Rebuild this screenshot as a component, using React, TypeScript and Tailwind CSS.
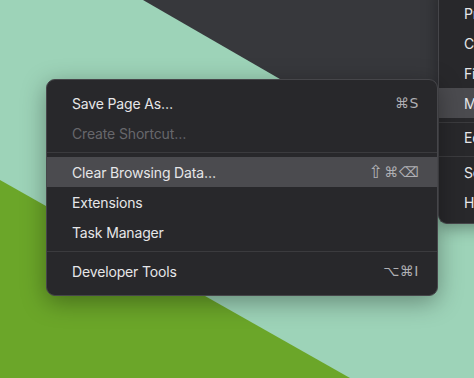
import React from 'react';

type Item =
  | { kind: 'item'; label: string; shortcut?: React.ReactNode; disabled?: boolean; active?: boolean; h?: string }
  | { kind: 'sep'; h?: string; align?: string };

const moreTools: Item[] = [
  { kind: 'item', label: 'Save Page As…', shortcut: '⌘S' },
  { kind: 'item', label: 'Create Shortcut…', disabled: true },
  { kind: 'sep' },
  {
    kind: 'item',
    label: 'Clear Browsing Data…',
    shortcut: (
      <>
        <span className="text-[18px] leading-none">⇧</span>⌘⌫
      </>
    ),
    active: true,
  },
  { kind: 'item', label: 'Extensions' },
  { kind: 'item', label: 'Task Manager' },
  { kind: 'sep' },
  { kind: 'item', label: 'Developer Tools', shortcut: '⌥⌘I' },
];

const mainMenu: Item[] = [
  { kind: 'item', label: 'Print…' },
  { kind: 'item', label: 'Cast…' },
  { kind: 'item', label: 'Find…' },
  { kind: 'item', label: 'More Tools', active: true },
  { kind: 'sep', h: 'h-[8px]' },
  { kind: 'item', label: 'Edit', h: 'h-[22px]' },
  { kind: 'sep', h: 'h-[9px]', align: 'items-end' },
  { kind: 'item', label: 'Settings' },
  { kind: 'item', label: 'Help' },
];

function Row({ item }: { item: Item }) {
  if (item.kind === 'sep') {
    return (
      <div className={`${item.h ?? 'h-[9px]'} flex ${item.align ?? 'items-center'}`}>
        <div className="h-px w-full bg-[#3b3b3e]" />
      </div>
    );
  }
  return (
    <div
      className={`${item.h ?? 'h-[30px]'} flex items-center justify-between pl-[25px] pr-[18px] whitespace-nowrap ${
        item.active ? 'bg-[#4b4b4f]' : ''
      }`}
    >
      <span className={item.disabled ? 'text-[#67676b]' : 'text-[#e6e6e8]'}>{item.label}</span>
      {item.shortcut && (
        <span className="flex items-center text-[#b0b0b4] font-['DejaVu_Sans',sans-serif] text-[14px] tracking-[0.5px]">
          {item.shortcut}
        </span>
      )}
    </div>
  );
}

export default function App() {
  return (
    <div className="relative w-[474px] h-[378px] overflow-hidden bg-[#9dd3b8] font-['Inter','Liberation_Sans',sans-serif] text-[14px] tracking-[-0.15px] antialiased">
      {/* wallpaper */}
      <svg className="absolute inset-0" width="474" height="378" viewBox="0 0 474 378">
        <polygon points="143,0 474,0 474,191" fill="#37383c" />
        <polygon points="0,180 350,378 0,378" fill="#6ba629" />
      </svg>

      {/* parent menu, cut off on the right */}
      <div className="absolute left-[438px] top-[-14px] w-[200px] pt-[12px] pb-[6px] bg-[#28282b] rounded-bl-[9px] border-l border-b border-[#46464a] shadow-[0_4px_16px_rgba(0,0,0,0.35)] overflow-hidden">
        {mainMenu.map((it, i) => (
          <Row key={i} item={it} />
        ))}
      </div>

      {/* More Tools submenu */}
      <div className="absolute left-[46px] top-[79px] w-[392px] pt-[8px] pb-[9px] bg-[#28282b] rounded-[9px] border border-[#46464a] shadow-[0_6px_24px_rgba(0,0,0,0.35)] overflow-hidden">
        {moreTools.map((it, i) => (
          <Row key={i} item={it} />
        ))}
      </div>
    </div>
  );
}
